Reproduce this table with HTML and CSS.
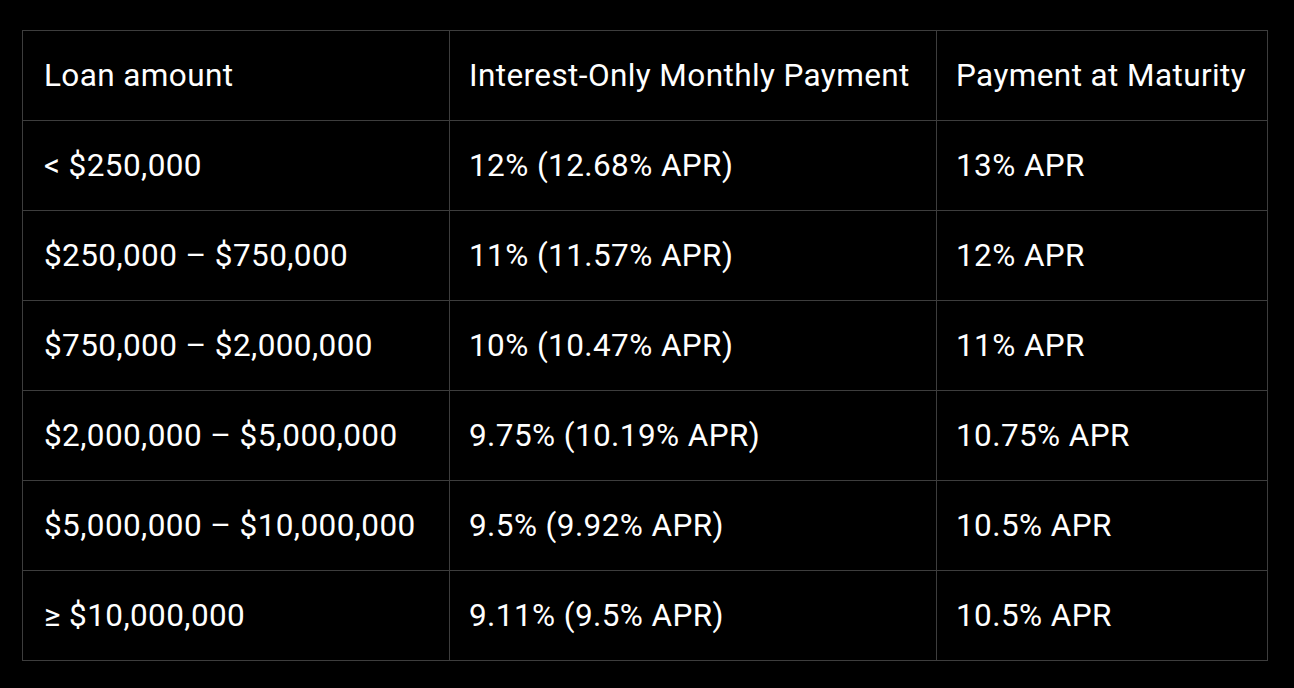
FILE: index.html
```html
<!DOCTYPE html>
<html lang="en">
<head>
<meta charset="utf-8">
<title>Loan rates</title>
<link rel="stylesheet" href="styles.css">
</head>
<body>
<main class="page">
  <table class="rates">
    <colgroup>
      <col class="c1"><col class="c2"><col class="c3">
    </colgroup>
    <thead>
      <tr><th>Loan amount</th><th>Interest-Only Monthly Payment</th><th>Payment at Maturity</th></tr>
    </thead>
    <tbody>
      <tr><td>&lt; $250,000</td><td>12% (12.68% APR)</td><td>13% APR</td></tr>
      <tr><td>$250,000 – $750,000</td><td>11% (11.57% APR)</td><td>12% APR</td></tr>
      <tr><td>$750,000 – $2,000,000</td><td>10% (10.47% APR)</td><td>11% APR</td></tr>
      <tr><td>$2,000,000 – $5,000,000</td><td>9.75% (10.19% APR)</td><td>10.75% APR</td></tr>
      <tr><td>$5,000,000 – $10,000,000</td><td>9.5% (9.92% APR)</td><td>10.5% APR</td></tr>
      <tr><td>≥ $10,000,000</td><td>9.11% (9.5% APR)</td><td>10.5% APR</td></tr>
    </tbody>
  </table>
</main>
</body>
</html>
```
FILE: styles.css
```css
html, body {
  margin: 0;
  padding: 0;
  background: #000;
}
.page {
  padding: 30px 0 0 22px;
}
.rates {
  border-collapse: collapse;
  table-layout: fixed;
  width: 1245px;
  font-family: Roboto, "Liberation Sans", Arial, sans-serif;
  font-size: 31.5px;
  letter-spacing: 0.4px;
  color: #fff;
}
.c1 { width: 427px; }
.c2 { width: 487px; }
.c3 { width: 331px; }
.rates th, .rates td {
  border: 1px solid #3d3d3d;
  height: 89px;
  padding: 0 0 0 19px;
  text-align: left;
  font-weight: normal;
  white-space: nowrap;
  vertical-align: middle;
}
.rates th:first-child, .rates td:first-child {
  padding-left: 21px;
}
```
